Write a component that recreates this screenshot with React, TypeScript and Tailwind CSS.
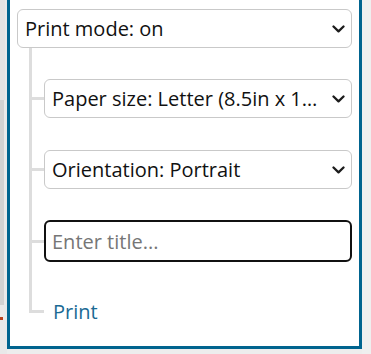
const font = { fontFamily: '"Open Sans", "Liberation Sans", sans-serif' };

function Chevron() {
  return (
    <svg width="13" height="8" viewBox="0 0 13 8" className="shrink-0">
      <polyline points="1.5,1.5 6.5,6.3 11.5,1.5" fill="none" stroke="#1c1c1c" strokeWidth="2.3" strokeLinecap="round" strokeLinejoin="round" />
    </svg>
  );
}

function FakeSelect({ label }: { label: string }) {
  return (
    <div className="flex h-[39px] w-full min-w-0 items-center rounded-[6px] border border-[#c9c9c9] bg-white pl-[7px] pr-[6px]">
      <span className="min-w-0 flex-1 truncate text-[20px] leading-[26px] text-[#111111]">{label}</span>
      <span className="ml-[4px] flex w-[14px] shrink-0 justify-center">
        <Chevron />
      </span>
    </div>
  );
}

function Branch({ children }: { children: React.ReactNode }) {
  return (
    <div className="flex items-center">
      <div className="h-[3px] w-[12px] shrink-0 bg-[#dddddd]" />
      <div className="min-w-0 flex-1">{children}</div>
    </div>
  );
}

export default function App() {
  return (
    <div className="flex h-[354px] w-[371px] overflow-hidden bg-[#ededed]" style={font}>
      {/* left page edge */}
      <div className="flex h-full w-[7px] flex-col bg-[#e9e9e9]">
        <div className="h-[100px] w-[5px] bg-[#e4e4e4]" />
        <div className="h-[205px] w-[4px] bg-[#d2d2d2]" />
        <div className="mt-[12px] h-[3px] w-[3px] bg-[#b8401c]" />
      </div>

      {/* print panel */}
      <div className="flex h-[349px] w-[355px] flex-col border-x-[3px] border-b-[3px] border-[#00648f] bg-white px-[7px] pt-[9px]">
        <FakeSelect label="Print mode: on" />

        <div className="pl-[12px]">
          <div className="flex flex-col border-l-[3px] border-[#dddddd] pt-[31px]">
            <Branch>
              <FakeSelect label="Paper size: Letter (8.5in x 11in)" />
            </Branch>
            <div className="mt-[32px]">
              <Branch>
                <FakeSelect label="Orientation: Portrait" />
              </Branch>
            </div>
            <div className="mt-[31px]">
              <Branch>
                <input
                  placeholder="Enter title..."
                  className="h-[42px] w-full rounded-[6px] border-[2.5px] border-[#111111] bg-white px-[6px] text-[20px] text-[#111111] outline-none placeholder:text-[#767676]"
                />
              </Branch>
            </div>
          </div>

          <div className="flex items-start">
            <div className="h-[51px] w-[15px] shrink-0 border-b-[3px] border-l-[3px] border-[#dddddd]" />
            <a className="ml-[9px] mt-[38px] text-[20px] leading-[24px] text-[#1a6a94]">Print</a>
          </div>
        </div>
      </div>

      <div className="h-full flex-1 bg-[#efefef]" />
    </div>
  );
}
